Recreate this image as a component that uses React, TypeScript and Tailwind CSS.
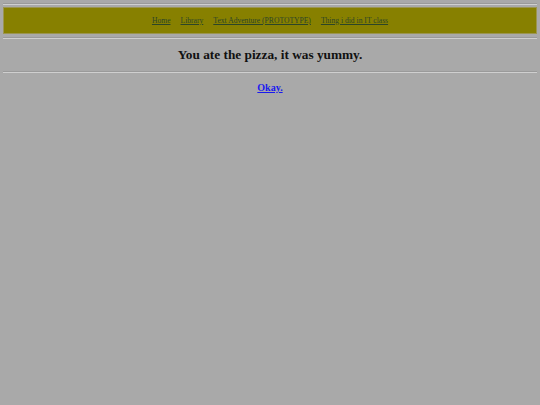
import React from "react";

const links = ["Home", "Library", "Text Adventure (PROTOTYPE)", "Thing i did in IT class"];

const Rule: React.FC<{ className?: string }> = ({ className = "" }) => (
  <div className={`mx-[3px] h-[2px] border-t border-[#9a9a9a] border-b border-b-[#cfcfcf] ${className}`} />
);

export default function App() {
  return (
    <div className="min-h-screen bg-[#a9a9a9] pt-[3px] font-['Liberation_Serif',serif]">
      <Rule />
      <div className="mx-[3px] mt-[2px] flex h-[27px] items-center justify-center gap-[10px] border border-[#9b9550] bg-[#878000]">
        {links.map((l) => (
          <a key={l} href="#" className="text-[7.6px] leading-none text-[#2c4528] underline">
            {l}
          </a>
        ))}
      </div>
      <Rule className="mt-[3px]" />
      <h2 className="mt-[8px] text-center text-[13.3px] font-bold leading-[15px] text-[#111]">
        You ate the pizza, it was yummy.
      </h2>
      <Rule className="mt-[9px]" />
      <div className="mt-[7px] text-center leading-[12px]">
        <a href="#" className="text-[10px] font-bold leading-[12px] text-[#1a1aee] underline">
          Okay.
        </a>
      </div>
    </div>
  );
}
